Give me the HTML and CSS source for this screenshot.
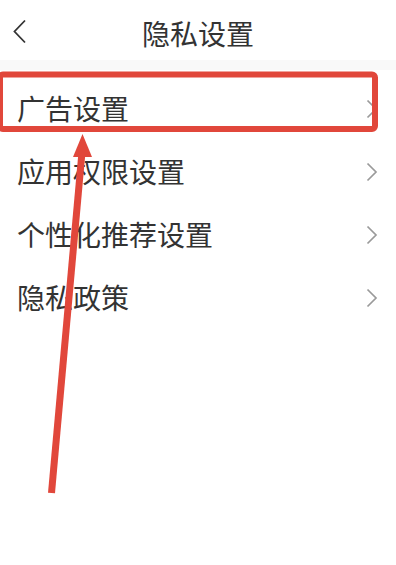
FILE: index.html
```html
<!DOCTYPE html>
<html lang="zh-CN">
<head>
    <meta charset="UTF-8">
    <meta name="viewport" content="width=device-width, initial-scale=1.0">
    <title>隐私设置</title>
    <link rel="stylesheet" href="styles.css">
</head>
<body>
    <div class="page">
        <div class="header">
            <span class="back">
                <svg width="16" height="26" viewBox="0 0 16 26"><path d="M13 1.5 L2.5 12.5 L13 23.5" fill="none" stroke="#333" stroke-width="1.8"/></svg>
            </span>
            <h1>隐私设置</h1>
        </div>
        <div class="divider"></div>
        <ul class="list">
            <li class="row"><span>广告设置</span><svg class="chev" width="12" height="20" viewBox="0 0 12 20"><path d="M1.5 1.5 L10 10 L1.5 18.5" fill="none" stroke="#9a9a9a" stroke-width="1.7"/></svg></li>
            <li class="row"><span>应用权限设置</span><svg class="chev" width="12" height="20" viewBox="0 0 12 20"><path d="M1.5 1.5 L10 10 L1.5 18.5" fill="none" stroke="#9a9a9a" stroke-width="1.7"/></svg></li>
            <li class="row"><span>个性化推荐设置</span><svg class="chev" width="12" height="20" viewBox="0 0 12 20"><path d="M1.5 1.5 L10 10 L1.5 18.5" fill="none" stroke="#9a9a9a" stroke-width="1.7"/></svg></li>
            <li class="row"><span>隐私政策</span><svg class="chev" width="12" height="20" viewBox="0 0 12 20"><path d="M1.5 1.5 L10 10 L1.5 18.5" fill="none" stroke="#9a9a9a" stroke-width="1.7"/></svg></li>
        </ul>

        <!-- annotation drawn over the screenshot -->
        <svg class="mark" width="396" height="565" viewBox="0 0 396 565">
            <rect x="0" y="74.5" width="375" height="54.5" rx="3" fill="none" stroke="#e1473b" stroke-width="6"/>
            <line x1="51.5" y1="493" x2="82" y2="152" stroke="#e1473b" stroke-width="7"/>
            <polygon points="82.5,134 73,157 92,157" fill="#e1473b"/>
        </svg>
    </div>
</body>
</html>
```

FILE: styles.css
```css
body {
    margin: 0;
    background-color: #fff;
    font-family: "Noto Sans CJK SC", "Noto Sans", sans-serif;
    color: #333;
}
.page {
    position: relative;
    width: 396px;
    height: 565px;
    overflow: hidden;
}
.header {
    height: 54px;
    padding-top: 6px;
    display: flex;
    align-items: center;
    justify-content: center;
    position: relative;
}
.header h1 {
    margin: 0;
    font-size: 28px;
    font-weight: 400;
    line-height: 1;
}
.back {
    position: absolute;
    left: 12px;
    top: 19px;
    display: flex;
}
.divider {
    height: 10px;
    background-color: #f9f9f9;
}
.list {
    list-style: none;
    margin: 0;
    padding: 7px 0 0;
}
.row {
    height: 63px;
    display: flex;
    align-items: center;
    justify-content: space-between;
    padding: 0 18px 0 17px;
    font-size: 28px;
    line-height: 1;
}
.row span {
    margin-top: -1px;
}
.chev {
    margin-top: 0;
}
.mark {
    position: absolute;
    left: 0;
    top: 0;
    pointer-events: none;
}
```
